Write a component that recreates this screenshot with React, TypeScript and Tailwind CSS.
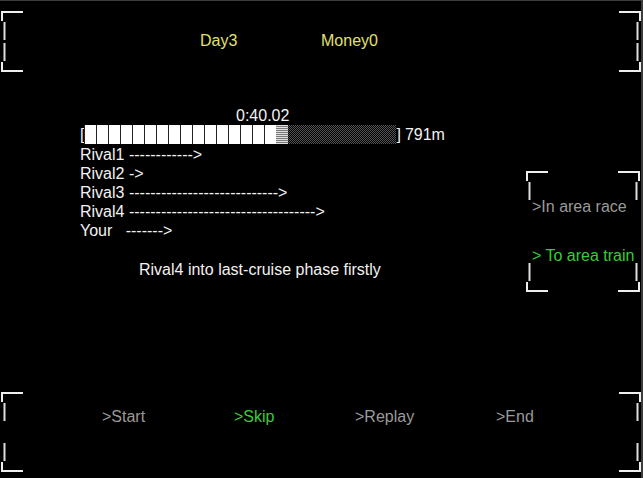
import type { ReactNode } from 'react';

type CornerPos = 'tl' | 'tr' | 'bl' | 'br';

const cornerClass = {
  tl: 'left-0 top-0',
  tr: 'right-0 top-0',
  bl: 'left-0 bottom-0',
  br: 'right-0 bottom-0',
} satisfies Record<CornerPos, string>;

const cornerFlip = {
  tl: '',
  tr: 'translate(23 0) scale(-1 1)',
  bl: 'translate(0 30) scale(1 -1)',
  br: 'translate(23 30) scale(-1 -1)',
} satisfies Record<CornerPos, string>;

// bracket corner, drawn like the ┌─ │ glyphs of the original
const Corner = ({ pos }: { pos: CornerPos }) => (
  <svg width="23" height="30" viewBox="0 0 23 30" className={`pointer-events-none absolute ${cornerClass[pos]}`}>
    <g transform={cornerFlip[pos]}>
      <rect x="0" y="0" width="22" height="2" fill="#eeeeee" />
      <rect x="0" y="0" width="2" height="10" fill="#eeeeee" />
      <rect x="2.5" y="11" width="2" height="18" fill="#dddddd" />
    </g>
  </svg>
);

const Frame = ({ className, children }: { className: string; children?: ReactNode }) => (
  <div className={`relative shrink-0 ${className}`}>
    <Corner pos="tl" />
    <Corner pos="tr" />
    <Corner pos="bl" />
    <Corner pos="br" />
    {children}
  </div>
);

const rivals = [
  { label: 'Rival1 ', dashes: 12 },
  { label: 'Rival2 ', dashes: 1 },
  { label: 'Rival3 ', dashes: 28 },
  { label: 'Rival4 ', dashes: 35 },
  { label: 'Your   ', dashes: 7 },
];

const menu = [
  { label: 'Start', width: 'w-[132px]', tone: 'text-[#9a9a9a]' },
  { label: 'Skip', width: 'w-[121px]', tone: 'text-[#39cc39]' },
  { label: 'Replay', width: 'w-[141px]', tone: 'text-[#9a9a9a]' },
  { label: 'End', width: 'w-[80px]', tone: 'text-[#9a9a9a]' },
];

const FILLED = 16;

const ProgressBar = () => (
  <div className="flex h-[19px] items-center leading-[19px]">
    <span>[</span>
    {Array.from({ length: FILLED }, (_, i) => (
      <div key={i} className="h-[19px] w-[12px] border-l border-[#222] bg-white" />
    ))}
    <div className="h-[19px] w-[12px] bg-[repeating-linear-gradient(to_bottom,#e0e0e0_0_1px,#7a7a7a_1px_2px)]" />
    <div className="h-[19px] w-[108px] bg-[repeating-conic-gradient(#555_0_25%,#000_0_50%)] bg-[length:2px_2px]" />
    <span>]</span>
    <span className="ml-[4px]">791m</span>
  </div>
);

export default function App() {
  return (
    <div className="flex h-[478px] w-[643px] flex-col overflow-hidden border-t border-r-2 border-[#3c3c3c] bg-black font-['Liberation_Sans',Arial,sans-serif] text-[16px] text-[#f2f2f2]">
      <Frame className="ml-[1px] mt-[10px] h-[61px] w-[640px]">
        <div className="flex pl-[199px] pt-[20px] leading-[19px] text-[#e0e070]">
          <span className="w-[121px]">Day3</span>
          <span>Money0</span>
        </div>
      </Frame>

      <div className="mt-[34px] flex items-start">
        <div className="flex w-[446px] shrink-0 flex-col pl-[80px] leading-[19px]">
          <p className="pl-[156px]">0:40.02</p>
          <ProgressBar />
          <div className="mt-[1px] flex flex-col">
            {rivals.map((r) => (
              <p key={r.label} className="whitespace-pre">
                {r.label}
                {'-'.repeat(r.dashes)}&gt;
              </p>
            ))}
          </div>
          <p className="mt-[20px] pl-[59px]">Rival4 into last-cruise phase firstly</p>
        </div>

        <Frame className="ml-[80px] mt-[65px] h-[121px] w-[114px]">
          <div className="flex flex-col whitespace-pre pl-[6px] pt-[26px] leading-[19px]">
            <span className="text-[#9a9a9a]">&gt;In area race</span>
            <span className="mt-[30px] text-[#39cc39]">&gt; To area train</span>
          </div>
        </Frame>
      </div>

      <Frame className="mb-[6px] ml-[1px] mt-auto h-[80px] w-[640px]">
        <div className="flex pl-[101px] pt-[15px] leading-[19px]">
          {menu.map((m) => (
            <span key={m.label} className={`${m.width} ${m.tone}`}>
              &gt;{m.label}
            </span>
          ))}
        </div>
      </Frame>
    </div>
  );
}
